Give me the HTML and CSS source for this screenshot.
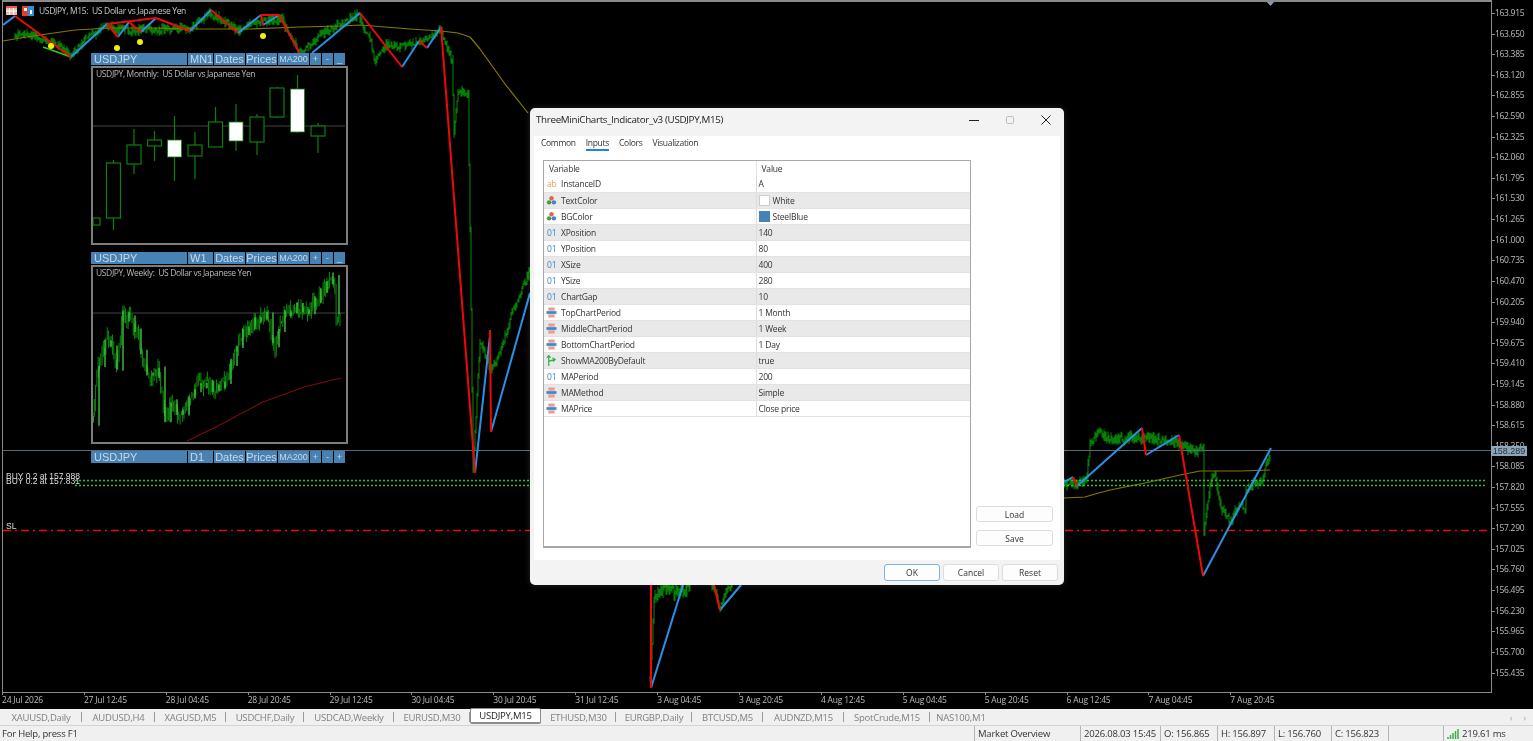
FILE: index.html
```html
<!DOCTYPE html>
<html lang="en">
<head>
  <meta charset="UTF-8">
  <title>USDJPY,M15</title>
  <link rel="stylesheet" href="styles.css">
</head>
<body>

<!-- icons used by the inputs table -->
<svg class="defs" width="0" height="0">
  <symbol id="i-color" viewBox="0 0 12 12">
    <circle cx="6" cy="3.6" r="2.4" fill="#e8604c"/>
    <circle cx="3.4" cy="8" r="2.4" fill="#3f9c4a"/>
    <circle cx="8.6" cy="8" r="2.4" fill="#3d86c6"/>
  </symbol>
  <symbol id="i-enum" viewBox="0 0 12 12">
    <rect x="2.5" y="0.5" width="7" height="3.5" fill="#ee9a94"/>
    <rect x="0.5" y="4.5" width="11" height="3" fill="#3d8ac8"/>
    <rect x="2.5" y="8" width="7" height="3.5" fill="#ee9a94"/>
  </symbol>
  <symbol id="i-bool" viewBox="0 0 12 12">
    <path d="M3 12V1M1 3l2-2.5L5 3M3 7l6-2M7 3l3 2-2.500 2" fill="none" stroke="#2fae4a" stroke-width="1.300"/>
  </symbol>
</svg>

<div class="terminal">

  <div class="chart-row">
    <div class="plot">
      <svg class="canvas" viewBox="3 2 1488 690">
        <!-- price, filled by chart.js -->
        <path id="mainPrice" class="price-line" d=""/>

        <polyline class="ma-line" points="3,41 20,38 40,35 75,30 110,28 150,28 200,29 250,29 300,27 340,26 360,25 385,27 410,29 441,31 458,33 470,37 480,49 505,84 528,113"/>
        <polyline class="ma-line" points="1064,498 1085,497 1095,494 1110,490 1145,483 1180,475 1190,473 1200,471 1220,471 1240,471 1270,470"/>

        <line class="price-now" x1="3" y1="450.500" x2="1491" y2="450.500"/>
        <line class="order-line" x1="75" y1="480.500" x2="1487" y2="480.500"/>
        <line class="order-line" x1="75" y1="485.500" x2="1487" y2="485.500"/>
        <line class="sl-line" x1="3" y1="530.500" x2="1487" y2="530.500"/>

        <line class="zz-green" x1="43" y1="47" x2="71" y2="57"/>
        <g class="zz-blue">
          <line x1="3" y1="25" x2="15" y2="16"/>
          <line x1="71" y1="57" x2="107" y2="24"/>
          <line x1="118" y1="37" x2="129" y2="22"/>
          <line x1="141" y1="32" x2="156" y2="18"/>
          <line x1="190" y1="31" x2="211" y2="10"/>
          <line x1="238" y1="33" x2="261" y2="15"/>
          <line x1="263" y1="25" x2="279" y2="15"/>
          <line x1="312" y1="53" x2="360" y2="13"/>
          <line x1="402" y1="67" x2="419" y2="41"/>
          <line x1="427" y1="48" x2="441" y2="27"/>
          <line x1="475" y1="473" x2="490" y2="335"/>
          <line x1="491" y1="432" x2="530" y2="293"/>
          <line x1="651" y1="688" x2="683" y2="585"/>
          <line x1="720" y1="610" x2="741" y2="585"/>
          <line x1="1064" y1="482" x2="1073" y2="477"/>
          <line x1="1077" y1="486" x2="1142" y2="428"/>
          <line x1="1146" y1="455" x2="1179" y2="435"/>
          <line x1="1203" y1="576" x2="1271" y2="448"/>
        </g>
        <g class="zz-red">
          <line x1="15" y1="16" x2="71" y2="57"/>
          <line x1="107" y1="24" x2="118" y2="37"/>
          <line x1="107" y1="24" x2="156" y2="18"/>
          <line x1="129" y1="22" x2="141" y2="32"/>
          <line x1="156" y1="18" x2="190" y2="31"/>
          <line x1="211" y1="10" x2="238" y2="33"/>
          <line x1="261" y1="15" x2="263" y2="25"/>
          <line x1="261" y1="15" x2="279" y2="15"/>
          <line x1="279" y1="15" x2="300" y2="54"/>
          <line x1="360" y1="13" x2="402" y2="67"/>
          <line x1="419" y1="41" x2="427" y2="48"/>
          <line x1="441" y1="27" x2="475" y2="473"/>
          <line x1="490" y1="330" x2="491" y2="432"/>
          <line x1="651" y1="585" x2="651" y2="688"/>
          <line x1="714" y1="585" x2="720" y2="610"/>
          <line x1="1073" y1="477" x2="1077" y2="486"/>
          <line x1="1142" y1="428" x2="1146" y2="455"/>
          <line x1="1179" y1="435" x2="1203" y2="576"/>
        </g>

        <circle class="dot" cx="51" cy="46" r="3"/>
        <circle class="dot" cx="117" cy="48" r="3"/>
        <circle class="dot" cx="140" cy="42" r="3"/>
        <circle class="dot" cx="263" cy="36" r="3"/>

        <polygon class="shift-mark" points="1267,2 1274,2 1270.500,6"/>

        <text class="order-text" x="6" y="479">BUY 0.2 at 157.988</text>
        <text class="order-text" x="6" y="484">BUY 0.2 at 157.831</text>
        <text class="order-text" x="6" y="529">SL</text>
      </svg>

      <div class="chart-title">
        <svg class="title-icon" width="11" height="9" viewBox="0 0 11 9">
          <rect width="11" height="9" fill="#f2b6b0"/>
          <rect width="11" height="2" fill="#e25b4e"/>
          <path d="M0 5h11M3.500 2v7M7.500 2v7" stroke="#fff" stroke-width="1"/>
        </svg>
        <svg class="title-icon" width="12" height="10" viewBox="0 0 12 10">
          <rect width="6" height="10" fill="#e2402e"/>
          <rect x="6" width="6" height="10" fill="#2f8fd8"/>
          <path d="M2 2h3v3H2zM8 4h2v4H8z" fill="#fff"/>
        </svg>
        <span>USDJPY, M15:  US Dollar vs Japanese Yen</span>
      </div>

      <div class="mini-stack">
        <div class="mini-bar">
          <span class="seg seg-symbol">USDJPY</span>
          <span class="seg seg-period">MN1</span>
          <span class="seg seg-dates">Dates</span>
          <span class="seg seg-prices">Prices</span>
          <span class="seg seg-ma">MA200</span>
          <span class="seg seg-btn">+</span>
          <span class="seg seg-btn">-</span>
          <span class="seg seg-btn">_</span>
        </div>
        <div class="mini-box">
          <div class="mini-title">USDJPY, Monthly:  US Dollar vs Japanese Yen</div>
          <svg class="mini-canvas" viewBox="93 68 252 175">
            <line class="mini-grid" x1="93" y1="126" x2="345" y2="126"/>
            <g class="wick">
              <line x1="113.500" y1="160" x2="113.500" y2="230"/>
              <line x1="134" y1="129" x2="134" y2="174"/>
              <line x1="154.500" y1="131" x2="154.500" y2="161"/>
              <line x1="174.500" y1="116" x2="174.500" y2="181"/>
              <line x1="195" y1="132" x2="195" y2="179"/>
              <line x1="215.500" y1="107" x2="215.500" y2="147"/>
              <line x1="236" y1="104" x2="236" y2="151"/>
              <line x1="257" y1="114" x2="257" y2="155"/>
              <line x1="277" y1="87" x2="277" y2="118"/>
              <line x1="297.500" y1="75" x2="297.500" y2="133"/>
              <line x1="318" y1="123" x2="318" y2="153"/>
            </g>
            <g class="candle">
              <rect x="93" y="218" width="7" height="7"/>
              <rect x="106.500" y="163" width="14" height="55"/>
              <rect x="127" y="145" width="14" height="19"/>
              <rect x="147.500" y="140" width="14" height="6"/>
              <rect x="188" y="145" width="14" height="11"/>
              <rect x="208.500" y="122" width="14" height="25"/>
              <rect x="250" y="117" width="14" height="25"/>
              <rect x="270" y="88" width="14" height="29"/>
              <rect x="311" y="126" width="14" height="10"/>
            </g>
            <g class="candle-up">
              <rect x="167.500" y="140" width="14" height="17"/>
              <rect x="229" y="122" width="14" height="19"/>
              <rect x="290.500" y="89" width="14" height="43"/>
            </g>
          </svg>
        </div>

        <div class="mini-bar">
          <span class="seg seg-symbol">USDJPY</span>
          <span class="seg seg-period">W1</span>
          <span class="seg seg-dates">Dates</span>
          <span class="seg seg-prices">Prices</span>
          <span class="seg seg-ma">MA200</span>
          <span class="seg seg-btn">+</span>
          <span class="seg seg-btn">-</span>
          <span class="seg seg-btn">_</span>
        </div>
        <div class="mini-box">
          <div class="mini-title">USDJPY, Weekly:  US Dollar vs Japanese Yen</div>
          <svg class="mini-canvas" viewBox="93 267 252 175">
            <line class="mini-grid" x1="93" y1="313" x2="345" y2="313"/>
            <path id="weeklyWick" class="weekly-wick" d=""/>
            <path id="weeklyBody" class="weekly-body" d=""/>
            <polyline class="ma-weekly" points="187,441 216,427 263,402 304,387 341,378"/>
          </svg>
        </div>

        <div class="mini-bar">
          <span class="seg seg-symbol">USDJPY</span>
          <span class="seg seg-period">D1</span>
          <span class="seg seg-dates">Dates</span>
          <span class="seg seg-prices">Prices</span>
          <span class="seg seg-ma">MA200</span>
          <span class="seg seg-btn">+</span>
          <span class="seg seg-btn">-</span>
          <span class="seg seg-btn">+</span>
        </div>
      </div>

      <div class="price-tag">158.289</div>
    </div>

    <div class="price-axis">
      <span>163.915</span><span>163.650</span><span>163.385</span><span>163.120</span>
      <span>162.855</span><span>162.590</span><span>162.325</span><span>162.060</span>
      <span>161.795</span><span>161.530</span><span>161.265</span><span>161.000</span>
      <span>160.735</span><span>160.470</span><span>160.205</span><span>159.940</span>
      <span>159.675</span><span>159.410</span><span>159.145</span><span>158.880</span>
      <span>158.615</span><span>158.350</span><span>158.085</span><span>157.820</span>
      <span>157.555</span><span>157.290</span><span>157.025</span><span>156.760</span>
      <span>156.495</span><span>156.230</span><span>155.965</span><span>155.700</span>
      <span>155.435</span>
    </div>
  </div>

  <div class="time-axis">
    <span>24 Jul 2026</span><span>27 Jul 12:45</span><span>28 Jul 04:45</span><span>28 Jul 20:45</span>
    <span>29 Jul 12:45</span><span>30 Jul 04:45</span><span>30 Jul 20:45</span><span>31 Jul 12:45</span>
    <span>3 Aug 04:45</span><span>3 Aug 20:45</span><span>4 Aug 12:45</span><span>5 Aug 04:45</span>
    <span>5 Aug 20:45</span><span>6 Aug 12:45</span><span>7 Aug 04:45</span><span>7 Aug 20:45</span>
  </div>

  <div class="tab-bar">
    <span class="tab tab-w82">XAUUSD,Daily</span>
    <span class="tab tab-w73">AUDUSD,H4</span>
    <span class="tab tab-w71">XAGUSD,M5</span>
    <span class="tab tab-w78">USDCHF,Daily</span>
    <span class="tab tab-w90">USDCAD,Weekly</span>
    <span class="tab tab-w76">EURUSD,M30</span>
    <span class="tab tab-active">USDJPY,M15</span>
    <span class="tab tab-w75">ETHUSD,M30</span>
    <span class="tab tab-w76">EURGBP,Daily</span>
    <span class="tab tab-w71">BTCUSD,M5</span>
    <span class="tab tab-w81">AUDNZD,M15</span>
    <span class="tab tab-w86">SpotCrude,M15</span>
    <span class="tab tab-last">NAS100,M1</span>
    <span class="tab-arrows"><span>‹</span><span>›</span></span>
  </div>

  <div class="status-bar">
    <span class="status-help">For Help, press F1</span>
    <span class="cell cell-market">Market Overview</span>
    <span class="cell cell-date">2026.08.03 15:45</span>
    <span class="cell cell-o">O: 156.865</span>
    <span class="cell cell-o">H: 156.897</span>
    <span class="cell cell-o">L: 156.760</span>
    <span class="cell cell-o">C: 156.823</span>
    <span class="cell cell-gap"></span>
    <span class="cell cell-ping">
      <svg width="12" height="11" viewBox="0 0 12 11"><path d="M1 11V9M3.500 11V7M6 11V5M8.500 11V3M11 11V1" stroke="#3fae4a" stroke-width="1.500"/></svg>
      219.61 ms
    </span>
  </div>

  <!-- indicator properties dialog -->
  <div class="dialog">
    <div class="dlg-title">
      <span class="dlg-caption">ThreeMiniCharts_Indicator_v3 (USDJPY,M15)</span>
      <span class="dlg-ctl">
        <svg width="10" height="10" viewBox="0 0 10 10"><path d="M0 5.500h10" stroke="#222"/></svg>
        <svg width="10" height="10" viewBox="0 0 10 10"><rect x="1.500" y="1.500" width="7" height="7" rx="1" fill="none" stroke="#bbb"/></svg>
        <svg width="10" height="10" viewBox="0 0 10 10"><path d="M0.500 0.500l9 9M9.500 0.500l-9 9" stroke="#222"/></svg>
      </span>
    </div>
    <div class="dlg-body">
      <div class="dlg-tabs">
        <span class="dlg-tab">Common</span>
        <span class="dlg-tab dlg-tab-on">Inputs</span>
        <span class="dlg-tab">Colors</span>
        <span class="dlg-tab">Visualization</span>
      </div>
      <div class="dlg-main">
        <div class="grid-box">
          <table class="inputs">
            <thead>
              <tr><th>Variable</th><th>Value</th></tr>
            </thead>
            <tbody>
              <tr><td><span class="ico ico-ab">ab</span>InstanceID</td><td>A</td></tr>
              <tr><td><svg class="ico-svg"><use href="#i-color"/></svg>TextColor</td><td><span class="swatch swatch-white"></span>White</td></tr>
              <tr><td><svg class="ico-svg"><use href="#i-color"/></svg>BGColor</td><td><span class="swatch swatch-steel"></span>SteelBlue</td></tr>
              <tr><td><span class="ico ico-num">01</span>XPosition</td><td>140</td></tr>
              <tr><td><span class="ico ico-num">01</span>YPosition</td><td>80</td></tr>
              <tr><td><span class="ico ico-num">01</span>XSize</td><td>400</td></tr>
              <tr><td><span class="ico ico-num">01</span>YSize</td><td>280</td></tr>
              <tr><td><span class="ico ico-num">01</span>ChartGap</td><td>10</td></tr>
              <tr><td><svg class="ico-svg"><use href="#i-enum"/></svg>TopChartPeriod</td><td>1 Month</td></tr>
              <tr><td><svg class="ico-svg"><use href="#i-enum"/></svg>MiddleChartPeriod</td><td>1 Week</td></tr>
              <tr><td><svg class="ico-svg"><use href="#i-enum"/></svg>BottomChartPeriod</td><td>1 Day</td></tr>
              <tr><td><svg class="ico-svg"><use href="#i-bool"/></svg>ShowMA200ByDefault</td><td>true</td></tr>
              <tr><td><span class="ico ico-num">01</span>MAPeriod</td><td>200</td></tr>
              <tr><td><svg class="ico-svg"><use href="#i-enum"/></svg>MAMethod</td><td>Simple</td></tr>
              <tr><td><svg class="ico-svg"><use href="#i-enum"/></svg>MAPrice</td><td>Close price</td></tr>
            </tbody>
          </table>
        </div>
        <div class="side-btns">
          <button class="btn btn-side">Load</button>
          <button class="btn btn-side">Save</button>
        </div>
      </div>
    </div>
    <div class="dlg-foot">
      <button class="btn btn-ok">OK</button>
      <button class="btn">Cancel</button>
      <button class="btn">Reset</button>
    </div>
  </div>

</div>

<script src="chart.js"></script>
</body>
</html>
```

FILE: styles.css
```css
* {
  box-sizing: border-box;
}

body {
  margin: 0;
  background: #000;
  font-family: "Open Sans", "Liberation Sans", sans-serif;
  overflow: hidden;
}

.defs {
  position: absolute;
}

/* the whole capture is a little soft */
.terminal {
  position: relative;
  width: 1533px;
  height: 741px;
  display: flex;
  flex-direction: column;
  background: #000;
  overflow: hidden;
  filter: blur(0.4px);
}

/* chart + axes */
.chart-row {
  display: flex;
  height: 693px;
  padding-left: 2px;
}

.plot {
  position: relative;
  flex: none;
  width: 1490px;
  height: 693px;
  border: 1px solid #8a8a8a;
  border-top-width: 2px;
  background: #000;
}

.canvas {
  position: absolute;
  left: 0;
  top: 0;
  width: 1488px;
  height: 690px;
}

.price-line {
  fill: none;
  stroke: #067f06;
  stroke-width: 1.100;
}

.ma-line {
  fill: none;
  stroke: #857900;
  stroke-width: 1.200;
  stroke-linejoin: round;
}

.price-now {
  stroke: #5c6a78;
  stroke-width: 1;
}

.order-line {
  stroke: #2fc42f;
  stroke-width: 1.500;
  stroke-dasharray: 2 2;
}

.sl-line {
  stroke: #e01010;
  stroke-width: 1.500;
  stroke-dasharray: 8 4 2 4;
}

.zz-blue line {
  stroke: #2b90e8;
  stroke-width: 2;
}

.zz-red line {
  stroke: #f00808;
  stroke-width: 2;
}

.zz-green {
  stroke: #20d020;
  stroke-width: 1.500;
}

.dot {
  fill: #f7ef00;
}

.shift-mark {
  fill: #8a9cb4;
}

.order-text {
  font-family: "Liberation Sans", sans-serif;
  font-size: 8.500px;
  fill: #ddd;
}

.chart-title {
  position: absolute;
  left: 3px;
  top: 3px;
  display: flex;
  align-items: center;
  gap: 5px;
  font-size: 8.500px;
  letter-spacing: -0.330px;
  color: #c8c8c8;
  white-space: pre;
}

.chart-title span {
  margin-left: 0;
}

.title-icon {
  flex: none;
}

/* three mini chart panels */
.mini-stack {
  position: absolute;
  left: 88px;
  top: 51px;
  width: 257px;
  display: flex;
  flex-direction: column;
}

.mini-bar {
  display: flex;
  gap: 1px;
  height: 12px;
  margin-bottom: 1px;
}

.seg {
  display: flex;
  align-items: center;
  background: #4682b4;
  color: #c9d8e6;
  font-family: "Liberation Sans", sans-serif;
  font-size: 11px;
  line-height: 12px;
  white-space: nowrap;
  overflow: hidden;
}

.seg-symbol { width: 96px; padding-left: 3px; }
.seg-period { width: 25px; padding-left: 2px; }
.seg-dates { width: 31px; justify-content: center; }
.seg-prices { width: 31px; justify-content: center; }
.seg-ma { width: 31px; justify-content: center; font-size: 9px; }
.seg-btn { width: 11px; justify-content: center; font-size: 9px; }

.mini-box {
  position: relative;
  height: 179px;
  margin-bottom: 7px;
  border: 2px solid #7d7d7d;
  background: #000;
}

.mini-canvas {
  display: block;
  width: 252px;
  height: 175px;
}

.mini-title {
  position: absolute;
  left: 3px;
  top: 0;
  font-size: 8.500px;
  letter-spacing: -0.370px;
  color: #b8b8b8;
  white-space: pre;
}

.mini-grid {
  stroke: #454545;
  stroke-width: 1.200;
}

.wick line {
  stroke: #0a800a;
  stroke-width: 1.200;
}

.candle rect {
  fill: #000;
  stroke: #0a800a;
  stroke-width: 1.200;
}

.candle-up rect {
  fill: #fff;
  stroke: #0a800a;
  stroke-width: 0.800;
}

.weekly-wick {
  fill: none;
  stroke: #0a8a0a;
  stroke-width: 1;
}

.weekly-body {
  fill: none;
  stroke: #46d046;
  stroke-width: 1.300;
}

.ma-weekly {
  fill: none;
  stroke: #7a0c0c;
  stroke-width: 1.200;
}

.price-tag {
  position: absolute;
  left: 1488px;
  top: 444px;
  width: 36px;
  height: 10px;
  background: #8ea6bb;
  color: #24303a;
  font-family: "Liberation Sans", sans-serif;
  font-size: 9px;
  line-height: 10px;
  text-align: center;
  z-index: 2;
}

.price-axis {
  flex: none;
  display: flex;
  flex-direction: column;
  padding-top: 3px;
  width: 41px;
  color: #bdbdbd;
  font-size: 8.500px;
  letter-spacing: -0.300px;
}

.price-axis span {
  flex: none;
  height: 20.610px;
  line-height: 20.610px;
  padding-left: 3px;
  position: relative;
}

.price-axis span::before {
  content: "";
  position: absolute;
  left: 0;
  top: 10px;
  width: 3px;
  height: 1px;
  background: #8a8a8a;
}

.time-axis {
  display: flex;
  height: 16px;
  padding-left: 2px;
  color: #bdbdbd;
  font-size: 8.500px;
  letter-spacing: -0.200px;
  line-height: 14px;
}

.time-axis span {
  flex: none;
  width: 81.900px;
  position: relative;
  white-space: nowrap;
}

.time-axis span::before {
  content: "";
  position: absolute;
  left: 0;
  top: -1px;
  width: 1px;
  height: 3px;
  background: #8a8a8a;
}

/* tabs */
.tab-bar {
  display: flex;
  align-items: stretch;
  height: 17px;
  background: #f0f0f0;
  border-bottom: 1px solid #d4d4d4;
  font-size: 9.500px;
  letter-spacing: -0.200px;
  color: #808080;
}

.tab {
  flex: none;
  display: flex;
  align-items: center;
  justify-content: center;
  white-space: nowrap;
  position: relative;
}

.tab::after {
  content: "";
  position: absolute;
  right: 0;
  top: 3px;
  bottom: 3px;
  width: 1px;
  background: #9a9a9a;
}

.tab-w82 { width: 82px; }
.tab-w73 { width: 73px; }
.tab-w71 { width: 71px; }
.tab-w78 { width: 78px; }
.tab-w90 { width: 90px; }
.tab-w76 { width: 76px; }
.tab-w75 { width: 75px; }
.tab-w81 { width: 81px; }
.tab-w86 { width: 86px; }
.tab-last { width: 62px; }
.tab-last::after { display: none; }

.tab-active {
  width: 71px;
  height: 16px;
  margin-top: -1px;
  background: #fff;
  border: 1px solid #8c8c8c;
  border-bottom: 2px solid #8c8c8c;
  border-radius: 2px;
  color: #222;
}

.tab-active::after { display: none; }

.tab-arrows {
  margin-left: auto;
  display: flex;
  align-items: center;
  gap: 11px;
  padding-right: 7px;
  color: #aaa;
}

/* status bar */
.status-bar {
  display: flex;
  align-items: center;
  height: 15px;
  background: #f0f0f0;
  font-size: 9.500px;
  letter-spacing: -0.200px;
  color: #333;
}

.status-help {
  width: 978px;
  padding-left: 2px;
}

.cell {
  flex: none;
  height: 15px;
  line-height: 15px;
  border-left: 1px solid #b4b4b4;
  padding-left: 3px;
  white-space: nowrap;
}

.cell-market { width: 106px; }
.cell-date { width: 80px; }
.cell-o { width: 57px; }
.cell-gap { width: 55px; }

.cell-ping {
  display: flex;
  align-items: center;
  gap: 3px;
  width: 90px;
}

/* dialog */
.dialog {
  position: absolute;
  left: 530px;
  top: 108px;
  width: 534px;
  height: 477px;
  display: flex;
  flex-direction: column;
  background: #f3f3f3;
  border-radius: 5px;
  box-shadow: 0 0 6px rgba(255, 255, 255, 0.150);
  color: #333;
  font-size: 8.500px;
  z-index: 3;
}

.dlg-title {
  display: flex;
  align-items: center;
  justify-content: space-between;
  flex: none;
  height: 28px;
  padding: 0 0 5px 6px;
}

.dlg-caption {
  font-size: 9.800px;
  letter-spacing: -0.320px;
  color: #222;
}

.dlg-ctl {
  display: flex;
  gap: 26px;
  padding-right: 13px;
}

.dlg-body {
  flex: none;
  height: 424px;
  margin: 0 4px;
  padding-left: 9px;
  background: #fff;
  display: flex;
  flex-direction: column;
}

.dlg-tabs {
  display: flex;
  gap: 10px;
  height: 24px;
  flex: none;
  margin-left: -2px;
  letter-spacing: -0.300px;
}

.dlg-tab {
  padding-top: 1px;
  height: 15px;
  line-height: 12px;
}

.dlg-tab-on {
  border-bottom: 2px solid #1a86e0;
  height: 15px;
}

.dlg-main {
  flex: 1;
  display: flex;
  gap: 5px;
  padding-bottom: 12px;
}

.grid-box {
  flex: none;
  width: 428px;
  border: 1px solid #a8a8a8;
  border-bottom-width: 2px;
}

.inputs {
  width: 100%;
  border-collapse: collapse;
  table-layout: fixed;
  font-size: 8.500px;
  letter-spacing: -0.200px;
}

.inputs th {
  height: 15px;
  padding: 0 0 0 5px;
  text-align: left;
  font-weight: normal;
}

.inputs th:first-child {
  width: 212px;
}

.inputs th + th {
  border-left: 1px solid #e4e4e4;
}

.inputs td {
  height: 16px;
  padding: 0 0 0 2px;
  border-bottom: 1px solid #e2e2e2;
  white-space: nowrap;
}

.inputs td:first-child {
  padding-left: 2px;
}

.inputs td + td {
  border-left: 1px solid #dcdcdc;
}

.inputs tbody tr:nth-child(even) td {
  background: #e9e9e9;
}

.ico {
  display: inline-block;
  width: 15px;
  font-size: 8.500px;
  text-align: left;
  padding-left: 1px;
}

.ico-ab { color: #e2a24a; }
.ico-num { color: #3d86c6; }

.ico-svg {
  display: inline-block;
  width: 11px;
  height: 11px;
  margin-right: 4px;
  vertical-align: -2px;
}

.swatch {
  display: inline-block;
  width: 11px;
  height: 11px;
  margin-right: 3px;
  vertical-align: -2px;
}

.swatch-white {
  background: #fff;
  border: 1px solid #ccc;
}

.swatch-steel {
  background: #4682b4;
}

.side-btns {
  flex: none;
  display: flex;
  flex-direction: column;
  justify-content: flex-end;
  gap: 8px;
  padding-bottom: 2px;
}

.btn {
  width: 56px;
  height: 17px;
  padding: 0;
  background: #fdfdfd;
  border: 1px solid #dcdcdc;
  border-radius: 3px;
  font-family: inherit;
  font-size: 8.500px;
  color: #333;
}

.btn-side {
  width: 77px;
  height: 16px;
}

.btn-ok {
  border: 1.500px solid #7db4e0;
}

.dlg-foot {
  display: flex;
  justify-content: flex-end;
  gap: 3px;
  flex: none;
  height: 25px;
  padding: 4px 6px 0 0;
}
```

FILE: chart.js
```js
// dense price lines, too many points to write out by hand

var seed = 7;
function rnd() {
  seed = (seed * 16807) % 2147483647;
  return (seed % 1000) / 1000;
}

function priceAt(pts, x) {
  for (var i = 1; i < pts.length; i++) {
    if (x <= pts[i][0]) {
      var a = pts[i - 1], b = pts[i];
      return a[1] + (b[1] - a[1]) * (x - a[0]) / (b[0] - a[0]);
    }
  }
  return pts[pts.length - 1][1];
}

// one vertical stroke per step, joined to the one before
function bars(pts, step, amp) {
  var d = "";
  var prev = pts[0][1];
  for (var x = pts[0][0]; x <= pts[pts.length - 1][0]; x += step) {
    var y = priceAt(pts, x) + (rnd() - 0.5) * amp;
    var top = Math.min(prev, y) - rnd() * amp * 0.7;
    var bot = Math.max(prev, y) + rnd() * amp * 0.7;
    d += "M" + x.toFixed(1) + " " + top.toFixed(1) + "V" + bot.toFixed(1);
    prev = y;
  }
  return d;
}

var left = [[15,36],[25,33],[45,40],[60,45],[70,55],[85,40],[105,27],[130,30],[190,28],[210,14],[240,30],[262,20],[282,20],[300,54],[320,35],[358,14],[370,40],[375,62],[385,45],[400,47],[420,42],[440,28],[452,60],[454,135],[458,90],[468,95],[470,230],[473,470],[480,340],[490,370],[497,360],[515,305],[530,270]];
var middle = [[650,680],[654,600],[662,588],[682,592],[690,585]];
var middle2 = [[712,585],[716,592],[720,608],[726,590],[732,585]];
var right = [[1064,483],[1086,482],[1090,445],[1098,431],[1110,440],[1140,437],[1176,443],[1195,452],[1203,448],[1203,540],[1205,520],[1210,485],[1215,476],[1222,510],[1230,520],[1240,505],[1245,510],[1245,492],[1250,485],[1262,482],[1270,455]];

document.getElementById("mainPrice").setAttribute("d",
  bars(left, 1, 6) + bars(middle, 1, 10) + bars(middle2, 1, 6) + bars(right, 1, 7));

var weekly = [[93,420],[96,377],[102,350],[108,337],[113,347],[117,370],[122,317],[130,317],[139,340],[142,363],[150,380],[159,370],[165,420],[172,400],[179,420],[189,397],[199,383],[216,388],[225,380],[233,360],[243,330],[257,323],[267,313],[274,350],[284,310],[297,307],[307,313],[321,293],[334,277],[336,317],[341,313]];

document.getElementById("weeklyWick").setAttribute("d", bars(weekly, 1.3, 12));
document.getElementById("weeklyBody").setAttribute("d", bars(weekly, 6, 6));
```
